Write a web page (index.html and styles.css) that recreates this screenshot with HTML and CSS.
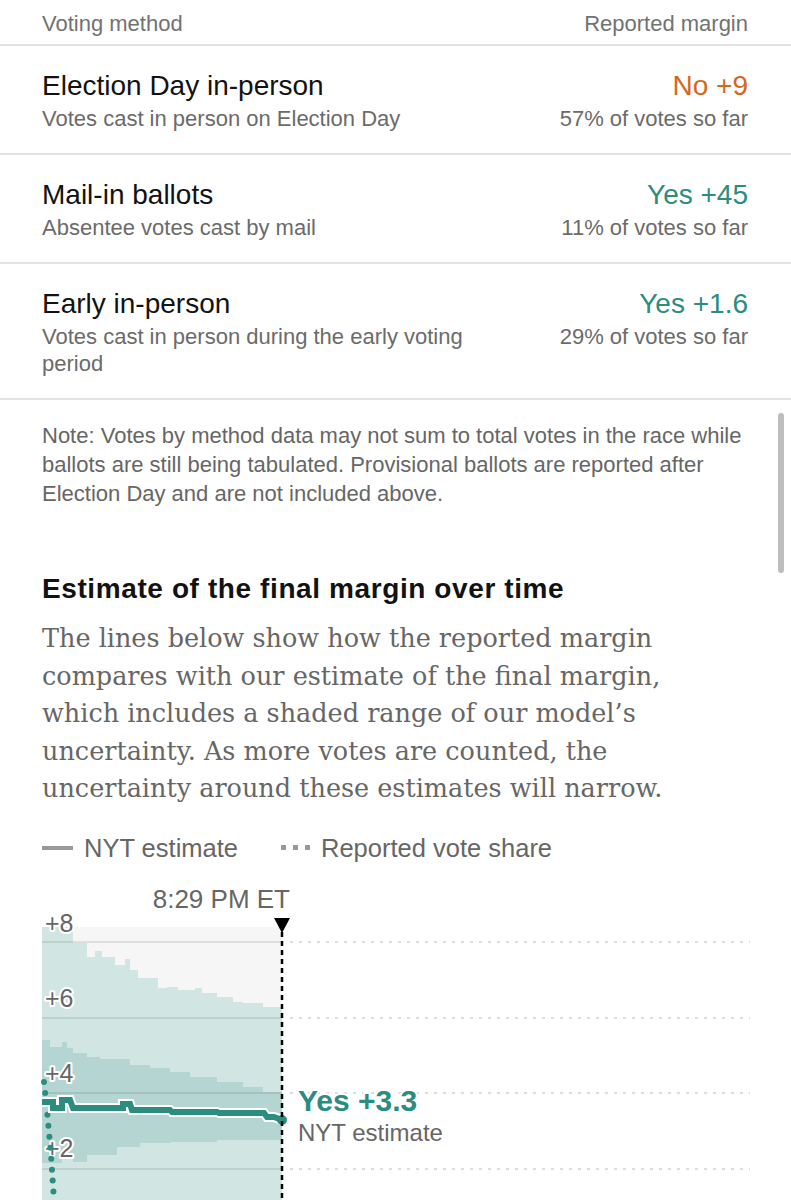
FILE: index.html
```html
<!DOCTYPE html>
<html lang="en">
<head>
    <meta charset="UTF-8">
    <meta name="viewport" content="width=device-width, initial-scale=1.0">
    <title>Votes by method</title>
    <link rel="stylesheet" href="styles.css">
</head>
<body>
    <div class="results">
        <div class="results-head">
            <span>Voting method</span>
            <span>Reported margin</span>
        </div>
        <div class="method-row">
            <div class="method">
                <div class="method-name">Election Day in-person</div>
                <div class="method-desc">Votes cast in person on Election Day</div>
            </div>
            <div class="margin">
                <div class="margin-value no">No +9</div>
                <div class="margin-share">57% of votes so far</div>
            </div>
        </div>
        <div class="method-row">
            <div class="method">
                <div class="method-name">Mail-in ballots</div>
                <div class="method-desc">Absentee votes cast by mail</div>
            </div>
            <div class="margin">
                <div class="margin-value yes">Yes +45</div>
                <div class="margin-share">11% of votes so far</div>
            </div>
        </div>
        <div class="method-row">
            <div class="method">
                <div class="method-name">Early in-person</div>
                <div class="method-desc">Votes cast in person during the early voting period</div>
            </div>
            <div class="margin">
                <div class="margin-value yes">Yes +1.6</div>
                <div class="margin-share">29% of votes so far</div>
            </div>
        </div>
    </div>

    <div class="content">
        <p class="note">Note: Votes by method data may not sum to total votes in the race while ballots are still being tabulated. Provisional ballots are reported after Election Day and are not included above.</p>

        <h2 class="section-title">Estimate of the final margin over time</h2>
        <p class="section-intro">The lines below show how the reported margin compares with our estimate of the final margin, which includes a shaded range of our model’s uncertainty. As more votes are counted, the uncertainty around these estimates will narrow.</p>

        <div class="legend">
            <span class="legend-item"><span class="swatch-line"></span>NYT estimate</span>
            <span class="legend-item"><span class="swatch-dots"><i></i><i></i><i></i></span>Reported vote share</span>
        </div>

        <div class="chart">
            <svg width="706" height="330" viewBox="0 0 706 330">
                <text class="chart-time" x="248" y="38" text-anchor="end">8:29 PM ET</text>

                <!-- plot background and uncertainty bands -->
                <rect x="0" y="57" width="240" height="273" fill="#f6f6f6"/>
                <polygon fill="#d1e5e2" points="0,57 31,57 31,73 45,73 45,87 53,87 53,81 60,81 60,87 73,87 73,95 83,95 83,89 88,89 88,100 96,100 96,108 116,108 116,118 125,118 125,117 136,117 136,120 153,120 153,118 160,118 160,123 175,123 175,127 191,127 191,132 201,132 201,133 221,133 221,137 240,137 240,330 0,330"/>
                <polygon fill="#b4d5d1" points="0,170 8,170 8,177 20,177 20,172 25,172 25,178 31,178 31,183 45,183 45,187 58,187 58,189 88,189 88,195 108,195 108,198 128,198 128,202 148,202 148,207 175,207 175,212 201,212 201,217 221,217 221,222 240,222 240,270 175,270 175,272 128,272 128,273 98,273 98,277 75,277 75,285 45,285 45,292 31,292 31,288 20,288 20,293 0,293"/>

                <!-- gridlines -->
                <g class="grid-solid">
                    <line x1="0" x2="240" y1="72" y2="72"/>
                    <line x1="0" x2="240" y1="148" y2="148"/>
                    <line x1="0" x2="240" y1="223" y2="223"/>
                    <line x1="0" x2="240" y1="299" y2="299"/>
                </g>
                <g class="grid-dotted">
                    <line x1="248" x2="708" y1="72" y2="72"/>
                    <line x1="248" x2="708" y1="148" y2="148"/>
                    <line x1="248" x2="708" y1="223" y2="223"/>
                    <line x1="248" x2="708" y1="299" y2="299"/>
                </g>

                <text class="axis-label" x="3" y="62">+8</text>
                <text class="axis-label" x="3" y="137">+6</text>
                <text class="axis-label" x="3" y="212">+4</text>
                <text class="axis-label" x="3" y="287">+2</text>

                <!-- reported vote share -->
                <path class="reported-line" d="M2,212 L5,240 L9,285 L12,330"/>

                <!-- estimate -->
                <path class="estimate-halo" d="M0,232 H11 V238 H20 V230 H28 L31,238 H81 V234 H88 L90,240 H128 L130,242 H175 L177,243 H222 L225,247 H232 L240,250"/>
                <path class="estimate-line" d="M0,232 H11 V238 H20 V230 H28 L31,238 H81 V234 H88 L90,240 H128 L130,242 H175 L177,243 H222 L225,247 H232 L240,250"/>
                <circle cx="240" cy="250" r="5" fill="#2b8c80"/>

                <!-- current time marker -->
                <line class="now-line" x1="240" x2="240" y1="62" y2="330"/>
                <polygon points="232,48 248,48 240,63" fill="#000"/>

                <text class="estimate-value" x="256" y="241">Yes +3.3</text>
                <text class="estimate-label" x="256" y="271">NYT estimate</text>
            </svg>
        </div>
    </div>

    <div class="scroll-thumb"></div>
</body>
</html>
```

FILE: styles.css
```css
* {
    margin: 0;
    padding: 0;
    box-sizing: border-box;
}
body {
    font-family: "Liberation Sans", Arial, sans-serif;
    background: #fff;
    color: #121212;
    overflow: hidden;
}
.results-head {
    display: flex;
    justify-content: space-between;
    padding: 10px 43px 7px 42px;
    border-bottom: 2px solid #e2e2e2;
    font-size: 22px;
    line-height: 27px;
    color: #727272;
}
.method-row {
    display: flex;
    justify-content: space-between;
    padding: 23px 43px 21px 42px;
    border-bottom: 2px solid #e2e2e2;
}
.method {
    max-width: 460px;
}
.margin {
    text-align: right;
}
.method-name,
.margin-value {
    font-size: 28px;
    line-height: 33px;
    margin-bottom: 3px;
    color: #121212;
}
.margin-value.no {
    color: #d4681c;
}
.margin-value.yes {
    color: #2b8c80;
}
.method-desc,
.margin-share {
    font-size: 22px;
    line-height: 27px;
    color: #6b6b6b;
}
.content {
    padding: 0 43px 0 42px;
}
.note {
    margin-top: 21px;
    font-size: 22px;
    line-height: 29px;
    color: #666;
}
.section-title {
    margin-top: 64px;
    font-size: 28px;
    line-height: 34px;
    letter-spacing: 0.6px;
    font-weight: bold;
    color: #121212;
}
.section-intro {
    max-width: 660px;
    margin-top: 14px;
    font-family: "DejaVu Serif", "Liberation Serif", serif;
    font-size: 25.5px;
    line-height: 37.5px;
    color: #666;
}
.legend {
    display: flex;
    gap: 43px;
    margin-top: 25px;
    font-size: 25.5px;
    line-height: 30px;
    color: #666;
}
.legend-item {
    display: flex;
    align-items: center;
    gap: 11px;
}
.swatch-line {
    width: 31px;
    height: 4px;
    background: #999;
}
.swatch-dots {
    display: flex;
    gap: 7px;
}
.swatch-dots i {
    width: 5px;
    height: 5px;
    background: #999;
}
.chart {
    margin-top: 7px;
}
.chart svg {
    display: block;
    overflow: visible;
    font-family: "Liberation Sans", Arial, sans-serif;
}
.chart-time {
    font-size: 26px;
    fill: #666;
}
.grid-solid line {
    stroke: rgba(0, 0, 0, 0.12);
    stroke-width: 1.5;
}
.grid-dotted line {
    stroke: #d2d2d2;
    stroke-width: 1.5;
    stroke-dasharray: 3 6;
}
.axis-label {
    font-size: 25px;
    fill: #666;
    stroke: #fff;
    stroke-width: 4px;
    stroke-linejoin: round;
    paint-order: stroke;
}
.reported-line {
    fill: none;
    stroke: #2b8c80;
    stroke-width: 6;
    stroke-linecap: round;
    stroke-dasharray: 0 11;
}
.estimate-halo {
    fill: none;
    stroke: #fff;
    stroke-width: 10;
}
.estimate-line {
    fill: none;
    stroke: #2b8c80;
    stroke-width: 6;
}
.now-line {
    stroke: #000;
    stroke-width: 2.5;
    stroke-dasharray: 5 4;
}
.estimate-value {
    font-size: 30px;
    font-weight: bold;
    fill: #2b8c80;
    stroke: #fff;
    stroke-width: 4px;
    paint-order: stroke;
}
.estimate-label {
    font-size: 24px;
    fill: #666;
}
.scroll-thumb {
    position: fixed;
    top: 413px;
    right: 7px;
    width: 6px;
    height: 160px;
    border-radius: 3px;
    background: #bdbdbd;
}
```
